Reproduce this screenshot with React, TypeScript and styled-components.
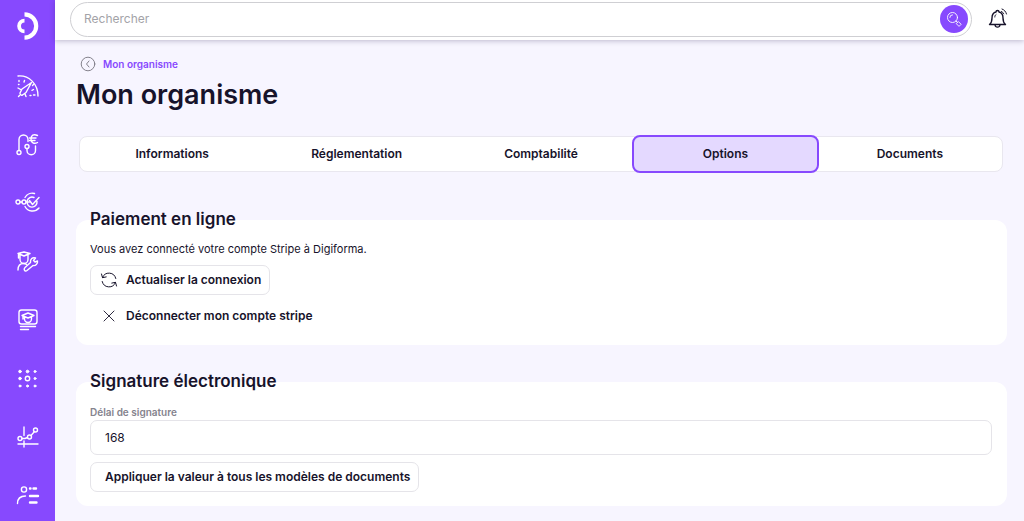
import React from "react";
import styled, { createGlobalStyle, css } from "styled-components";

const GlobalStyle = createGlobalStyle`
  *, *::before, *::after { box-sizing: border-box; }
  body {
    margin: 0;
    background: #f7f5ff;
    color: #17132b;
    font-family: Inter, "Liberation Sans", sans-serif;
    font-size: 12px;
    line-height: 16px;
  }
  button, input { font: inherit; color: inherit; }
`;

const Layout = styled.div`
  display: flex;
  min-height: 100vh;
`;

const Sidebar = styled.aside`
  display: flex;
  flex-direction: column;
  align-items: center;
  flex: 0 0 55px;
  padding: 11px 0 13px;
  background: #8749fe;
  color: #fff;
`;

const SidebarLink = styled.a`
  display: flex;
  color: inherit;
`;

const SidebarNav = styled.nav`
  display: flex;
  flex: 1;
  flex-direction: column;
  justify-content: space-between;
  margin-top: 32px;
`;

const Icon = styled.svg<{ $size: number; $stroke?: number }>`
  display: block;
  flex: none;
  width: ${(p) => p.$size}px;
  height: ${(p) => p.$size}px;
  fill: none;
  stroke: currentColor;
  stroke-width: ${(p) => p.$stroke ?? 1.4};
  stroke-linecap: round;
  stroke-linejoin: round;
`;

const Content = styled.div`
  flex: 1;
  min-width: 0;
`;

const Header = styled.header`
  display: flex;
  align-items: center;
  gap: 15px;
  height: 40px;
  padding: 0 15px 2px;
  background: #fff;
  box-shadow: 0 1px 5px rgba(40, 30, 80, 0.28);
`;

const SearchForm = styled.form`
  display: flex;
  align-items: center;
  flex: 1;
  height: 35px;
  padding: 0 3px 0 13px;
  border: 1px solid #cfcfd3;
  border-radius: 18px;
  background: #fff;
`;

const SearchInput = styled.input`
  flex: 1;
  min-width: 0;
  padding: 0;
  border: 0;
  outline: 0;
  background: none;
  &::placeholder { color: #a3a3a8; opacity: 1; }
`;

const RoundButton = styled.button`
  display: grid;
  place-items: center;
  width: 28px;
  height: 28px;
  padding: 0;
  border: 0;
  border-radius: 50%;
  background: #8749fe;
  color: #fff;
`;

const PlainButton = styled.button`
  padding: 0;
  border: 0;
  background: none;
`;

const Main = styled.main`
  padding: 16px 17px 16px 21px;
`;

const Breadcrumb = styled.a`
  display: flex;
  align-items: center;
  gap: 7px;
  width: fit-content;
  padding-left: 4px;
  color: #8749fe;
  font-size: 10px;
  font-weight: 600;
  text-decoration: none;
  svg { color: #77757f; }
`;

const PageTitle = styled.h1`
  margin: 5px 0 0;
  font-size: 27px;
  font-weight: 600;
  line-height: 36px;
`;

const Tabs = styled.nav`
  display: flex;
  margin: 23px 4px 0 3px;
  border: 1px solid #e9e7ef;
  border-radius: 8px;
  background: #fff;
`;

const Tab = styled.a<{ $active: boolean }>`
  flex: 1 1 0;
  margin: -2px -1px;
  padding: 9px 0;
  border: 2px solid transparent;
  border-radius: 8px;
  color: inherit;
  font-weight: 600;
  text-align: center;
  text-decoration: none;
  ${(p) =>
    p.$active &&
    css`
      border-color: #8749fe;
      background: #e4d9ff;
    `}
`;

const Card = styled.section<{ $spacing: number }>`
  display: flow-root;
  margin-top: ${(p) => p.$spacing}px;
  padding: 0 15px 14px 14px;
  border-radius: 12px;
  background: #fff;
`;

const CardTitle = styled.h2`
  margin: -13px 0 0;
  font-size: 17px;
  font-weight: 600;
  line-height: 24px;
`;

const Text = styled.p`
  margin: 10px 0 8px;
  font-size: 11px;
`;

const ButtonStack = styled.div`
  display: flex;
  flex-direction: column;
  align-items: flex-start;
  gap: 6px;
`;

const Button = styled.button<{ $icon?: boolean; $bare?: boolean }>`
  display: inline-flex;
  align-items: center;
  gap: 8px;
  height: 30px;
  padding: 0 ${(p) => (p.$icon ? "8px 0 9px" : "8px 0 14px")};
  border: 1px solid ${(p) => (p.$bare ? "transparent" : "#e5e4e9")};
  border-radius: 7px;
  background: #fff;
  font-weight: 600;
`;

const Label = styled.label`
  display: block;
  margin-top: 11px;
  color: #85838d;
  font-size: 10px;
  font-weight: 600;
`;

const Field = styled.input`
  display: block;
  width: 100%;
  height: 35px;
  margin-bottom: 7px;
  padding: 0 14px;
  border: 1px solid #e5e4e9;
  border-radius: 7px;
  background: #fff;
`;

const menu: { label: string; art: React.ReactNode }[] = [
  {
    label: "Tableau de bord",
    art: (
      <>
        <path d="M3 3C14 2 23 11 23 23" />
        <path d="M16.500 9.500 7 16 5 20a1.800 1.800 0 0 0 2.500 2L11 19.500zM3 15l3.500 2M11 23.500 10 21M3.500 23.500l1-1" />
        <path d="M4 7.500v1M9.500 7.500 9 9M18.500 16.500l-1.500.8M20 22h-1.500M17.500 12.500l1-1M3.500 11.500h.5M15 22.500h1" />
      </>
    ),
  },
  {
    label: "Ventes",
    art: (
      <>
        <circle cx="4" cy="20.500" r="2" />
        <circle cx="12" cy="14.500" r="2" />
        <path d="M4 18.500V7.500a4.500 4.500 0 0 1 9 0v2M12 16.500v2a4 4 0 0 0 8.500 0v-4.500" />
        <path d="M22.500 3.500c-4-2-6.500 0-6.500 3.500s3 5.500 6.500 3.500M14.500 6H21M14.500 8.500H20" />
      </>
    ),
  },
  {
    label: "Parcours",
    art: (
      <>
        <circle cx="3" cy="12" r="2" />
        <circle cx="9" cy="12" r="2" />
        <path d="M5 12h2M11 12h3.500M10 7.500C12 4 16 2.500 19.500 3.500M10 16.500C13 22 20 22.500 24 18" />
        <path d="M22 11.500a5 5 0 1 1-3-4M14.500 10.500l3 4 6.500-7" />
      </>
    ),
  },
  {
    label: "Formateurs",
    art: (
      <>
        <path d="M3 4.500 9 3l6 1.500L9 7zM5 6v4.500a4 4 0 0 0 8 0V6M3.500 5v4" />
        <path d="M3 21c0-5 2-6.500 5.500-6.500 1 0 2 .2 3 .8" />
        <path d="m10 18.500 5.500-5c-.5-3.500 2-5.500 5-4.500l-2 2.500 1.500 1.500 2.500-1c.5 3-2 5-4.500 4.500L12 21.500c-2 1.500-4-1-2-3Z" />
      </>
    ),
  },
  {
    label: "Formations",
    art: (
      <>
        <rect x="4" y="3" width="18" height="14" rx="2.500" />
        <path d="m7 8.500 6-2.500 6 2.500-6 2.500zM9.500 10v2a3.500 3.500 0 0 0 7 0v-2M8 9v3M5.500 19.500h15M5.500 22.500h8" />
      </>
    ),
  },
  {
    label: "Modules",
    art: (
      <>
        <circle cx="12.500" cy="12.500" r="2.200" />
        {[
          [5, 5.500, 1.3], [12.500, 5.500, 1.3], [20, 5.500, 1],
          [5, 12.500, 1.3], [20, 12.500, 1],
          [5, 20, 1], [12.500, 20, 1], [20, 20, 1],
        ].map(([x, y, r]) => (
          <circle key={`${x}-${y}`} cx={x} cy={y} r={r} fill="currentColor" strokeWidth="1" />
        ))}
      </>
    ),
  },
  {
    label: "Statistiques",
    art: (
      <>
        <circle cx="5" cy="14.500" r="2" />
        <circle cx="14.500" cy="13" r="2" />
        <circle cx="20.500" cy="6" r="2" />
        <path d="M7 14.500h3l2.500-1M16 11.500l3.500-4M9 3v8.500M3 20h20M9 17v6" />
      </>
    ),
  },
  {
    label: "Utilisateurs",
    art: (
      <>
        <circle cx="9" cy="6.500" r="2.600" />
        <path d="M2.500 20.500c0-5 3-7.500 8-7.500" />
        <path d="M15 5.500h.5M18.500 5.500H21M15 13h8M15 19.500h6.500" strokeWidth="2.400" />
      </>
    ),
  },
];

const tabs = ["Informations", "Réglementation", "Comptabilité", "Options", "Documents"];

export default function App() {
  return (
    <>
      <GlobalStyle />
      <Layout>
        <Sidebar>
          <SidebarLink href="#" aria-label="Accueil">
            <Icon $size={30} viewBox="0 0 30 30">
              <path d="M11.500 3.300a11.500 11.500 0 0 1 0 23.400" strokeWidth="4.200" strokeLinecap="butt" />
              <path d="M11.500 9.600a5.400 5.400 0 0 0 0 10.800" strokeWidth="3.800" strokeLinecap="butt" />
            </Icon>
          </SidebarLink>
          <SidebarNav>
            {menu.map((item) => (
              <SidebarLink key={item.label} href="#" aria-label={item.label}>
                <Icon $size={26} viewBox="0 0 26 26">{item.art}</Icon>
              </SidebarLink>
            ))}
          </SidebarNav>
        </Sidebar>
        <Content>
          <Header>
            <SearchForm role="search">
              <SearchInput type="search" placeholder="Rechercher" aria-label="Rechercher" />
              <RoundButton type="button" aria-label="Lancer la recherche">
                <Icon $size={16} $stroke={0.9} viewBox="0 0 16 16">
                  <circle cx="6.500" cy="6.500" r="5" />
                  <path d="m10 10 1.200 1.200M10.500 12.300l1.800-1.800 2.800 2.800-1.800 1.800zM3.800 6.500a2.700 2.700 0 0 1 2.700-2.700" />
                </Icon>
              </RoundButton>
            </SearchForm>
            <PlainButton type="button" aria-label="Notifications">
              <Icon $size={22} $stroke={1.4} viewBox="0 0 22 22">
                <path d="M2.500 16.500c2-1.500 2.500-3 2.500-6.500C5 6.500 6.500 4.500 9 4c0-2 3-2 3 0 2.500.5 4 2.500 4 6 0 3.500.5 5 2.500 6.500zM8 17c.5 2.800 4.500 2.800 5 0" />
                <path d="M9 6.500c-.8.5-1.200 1.500-1.200 2.500M15 1c2.300.8 3.800 2.500 4.500 5M14.500 3.500c1 .4 1.700 1.200 2.200 2.300" strokeWidth="1" />
              </Icon>
            </PlainButton>
          </Header>
          <Main>
            <Breadcrumb href="#">
              <Icon $size={16} $stroke={0.9} viewBox="0 0 16 16">
                <circle cx="8" cy="8" r="6.800" />
                <path d="M9 5 6.500 8 9 11" />
              </Icon>
              Mon organisme
            </Breadcrumb>
            <PageTitle>Mon organisme</PageTitle>
            <Tabs>
              {tabs.map((name) => (
                <Tab key={name} href="#" $active={name === "Options"}>{name}</Tab>
              ))}
            </Tabs>
            <Card $spacing={48}>
              <CardTitle>Paiement en ligne</CardTitle>
              <Text>Vous avez connecté votre compte Stripe à Digiforma.</Text>
              <ButtonStack>
                <Button type="button" $icon>
                  <Icon $size={18} $stroke={1} viewBox="0 0 18 18">
                    <path d="M2.500 6.500A7 7 0 0 1 15.800 7.500M15.500 11.500A7 7 0 0 1 2.200 10.500M1.500 3l1 3.700 3.700-.8M16.500 15l-1-3.700-3.700.8" />
                  </Icon>
                  Actualiser la connexion
                </Button>
                <Button type="button" $icon $bare>
                  <Icon $size={18} $stroke={0.9} viewBox="0 0 18 18">
                    <path d="m4 4 10 10M14 4 4 14" />
                  </Icon>
                  Déconnecter mon compte stripe
                </Button>
              </ButtonStack>
            </Card>
            <Card $spacing={37}>
              <CardTitle>Signature électronique</CardTitle>
              <Label htmlFor="delai">Délai de signature</Label>
              <Field id="delai" type="text" inputMode="numeric" defaultValue="168" />
              <Button type="button">Appliquer la valeur à tous les modèles de documents</Button>
            </Card>
          </Main>
        </Content>
      </Layout>
    </>
  );
}
